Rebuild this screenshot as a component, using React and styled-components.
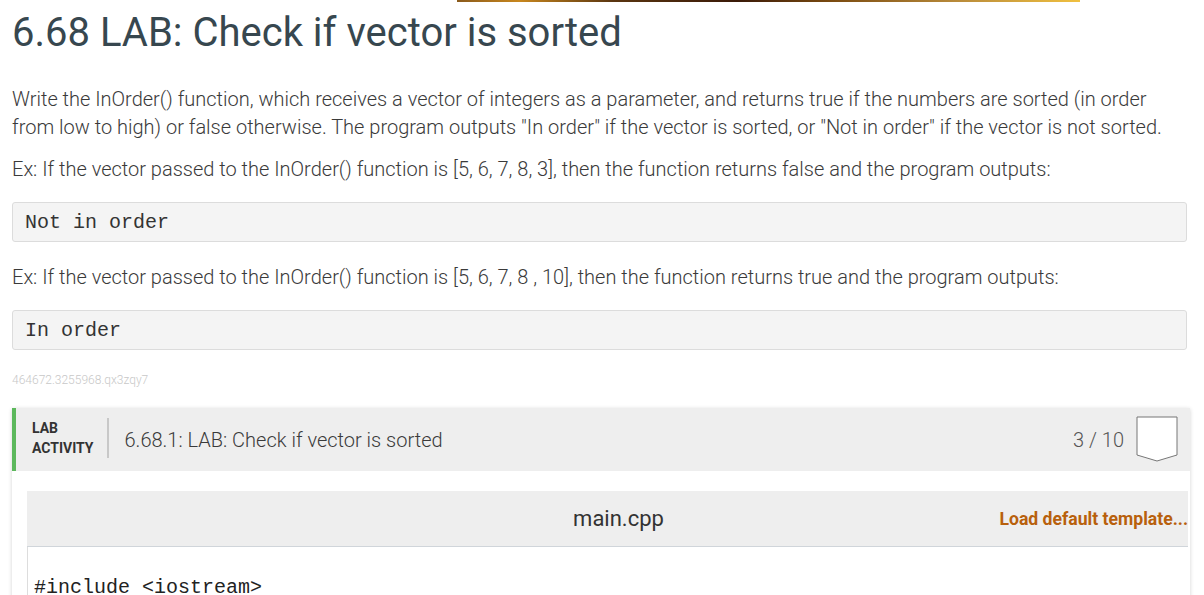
import React from "react";
import styled, { createGlobalStyle } from "styled-components";

const GlobalStyle = createGlobalStyle`
  body {
    margin: 0;
    background: #fff;
    font-family: Roboto, "Open Sans", sans-serif;
    overflow: hidden;
  }
`;

const Page = styled.div`
  padding: 0 17px 0 12px;
  width: 1204px;
  box-sizing: border-box;
`;

const BannerEdge = styled.div`
  height: 2px;
  width: 623px;
  margin-left: 445px;
  background: linear-gradient(90deg, #8a5a1c, #c8871e 10%, #5a3510 25%, #3a1a08 45%, #7a4a10 60%, #b88a3a 80%, #f0c040 100%);
`;

const Title = styled.h1`
  margin: 7px 0 0 0;
  font-size: 40px;
  font-weight: 400;
  line-height: 48px;
  color: #37474f;
`;

const Paragraph = styled.p`
  margin: ${props => props.top || 0}px 0 0 0;
  font-size: 20px;
  font-weight: 300;
  line-height: 28px;
  color: #3a3a3a;
`;

const CodeBox = styled.pre`
  margin: ${props => props.top}px 0 0 0;
  height: 40px;
  box-sizing: border-box;
  padding: 0 12px;
  display: flex;
  align-items: center;
  background: #f4f4f4;
  border: 1px solid #dcdcdc;
  border-radius: 3px;
  font-family: "Liberation Mono", "Courier New", monospace;
  font-size: 20px;
  color: #333;
`;

const Fingerprint = styled.div`
  margin-top: 23px;
  font-size: 12px;
  color: #c8c8c8;
  font-weight: 300;
`;

const Card = styled.div`
  margin-top: 21px;
  width: 1178px;
  box-shadow: 0 1px 4px rgba(0, 0, 0, 0.18);
  background: #fff;
`;

const CardHeader = styled.div`
  display: flex;
  align-items: center;
  height: 63px;
  background: #eeeeee;
  border-left: 4px solid #5cb85c;
  padding: 0 12px 0 16px;
`;

const Kind = styled.div`
  margin-top: -4px;
  font-size: 14px;
  font-weight: 700;
  line-height: 20px;
  color: #333;
  padding-right: 13px;
  border-right: 2px solid #c8c8c8;
  height: 40px;
  display: flex;
  flex-direction: column;
  justify-content: center;
`;

const CardTitle = styled.div`
  margin-left: 16px;
  font-size: 20px;
  font-weight: 300;
  color: #3a3a3a;
  flex: 1;
`;

const Score = styled.div`
  font-size: 20px;
  font-weight: 300;
  color: #555;
  margin-right: 12px;
`;

const CardBody = styled.div`
  padding: 20px 2px 0 15px;
  height: 130px;
`;

const EditorHeader = styled.div`
  position: relative;
  display: flex;
  align-items: center;
  justify-content: center;
  height: 55px;
  padding-left: 22px;
  background: #eeeeee;
  border-bottom: 1px solid #d0d5da;
`;

const FileName = styled.div`
  font-size: 22px;
  color: #333;
  font-weight: 400;
`;

const LoadLink = styled.div`
  position: absolute;
  right: 0;
  font-size: 17.6px;
  font-weight: 700;
  color: #b8600c;
`;

const EditorBody = styled.pre`
  margin: 0;
  border-left: 1px solid #ddd;
  padding: 29px 0 0 6px;
  font-family: "Liberation Mono", "Courier New", monospace;
  font-size: 20px;
  color: #222;
`;

function Badge() {
  return (
    <svg width="42" height="47" viewBox="0 0 42 47">
      <polygon points="1,1 41,1 41,39 21,45 1,39" fill="#fff" stroke="#777" strokeWidth="1" />
    </svg>
  );
}

export default function App() {
  return (
    <>
      <GlobalStyle />
      <Page>
        <BannerEdge />
        <Title>6.68 LAB: Check if vector is sorted</Title>
        <Paragraph top={28}>
          Write the InOrder() function, which receives a vector of integers as a parameter, and returns true if the numbers are sorted (in order from low to high) or false otherwise. The program outputs "In order" if the vector is sorted, or "Not in order" if the vector is not sorted.
        </Paragraph>
        <Paragraph top={14}>
          Ex: If the vector passed to the InOrder() function is [5, 6, 7, 8, 3], then the function returns false and the program outputs:
        </Paragraph>
        <CodeBox top={19}>Not in order</CodeBox>
        <Paragraph top={21}>
          Ex: If the vector passed to the InOrder() function is [5, 6, 7, 8 , 10], then the function returns true and the program outputs:
        </Paragraph>
        <CodeBox top={19}>In order</CodeBox>
        <Fingerprint>464672.3255968.qx3zqy7</Fingerprint>
        <Card>
          <CardHeader>
            <Kind>
              <span>LAB</span>
              <span>ACTIVITY</span>
            </Kind>
            <CardTitle>6.68.1: LAB: Check if vector is sorted</CardTitle>
            <Score>3 / 10</Score>
            <Badge />
          </CardHeader>
          <CardBody>
            <EditorHeader>
              <FileName>main.cpp</FileName>
              <LoadLink>Load default template...</LoadLink>
            </EditorHeader>
            <EditorBody>#include &lt;iostream&gt;</EditorBody>
          </CardBody>
        </Card>
      </Page>
    </>
  );
}
